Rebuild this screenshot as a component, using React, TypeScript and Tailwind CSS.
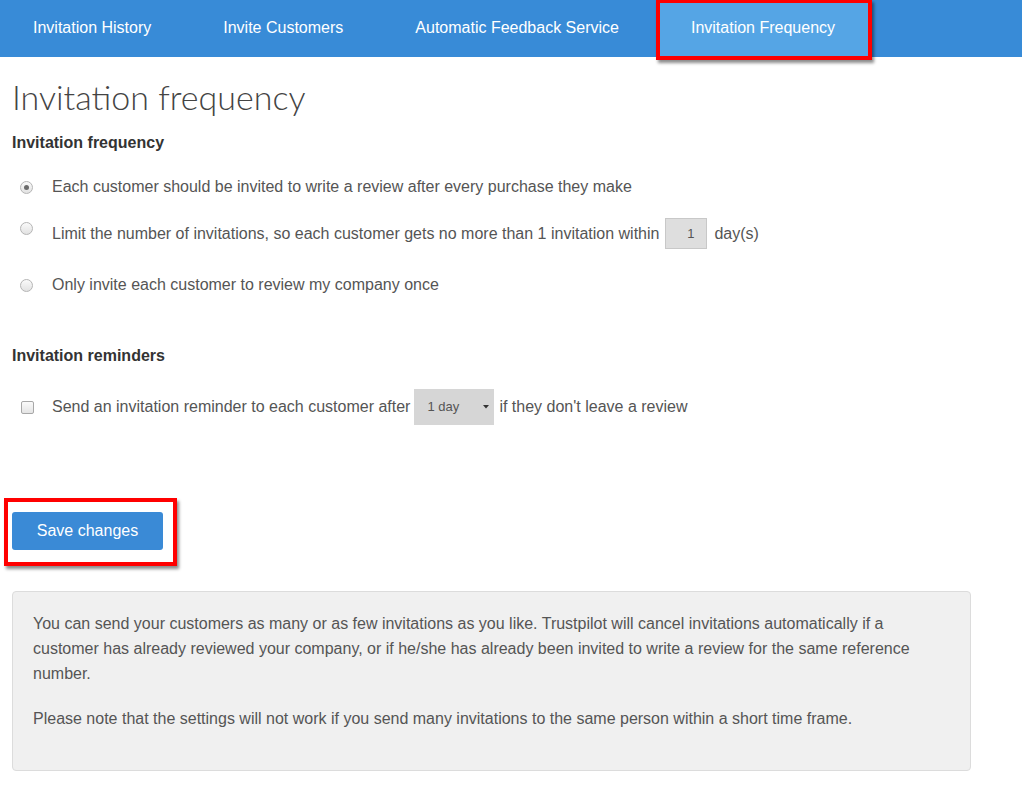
import React from 'react';

const TABS = ['Invitation History', 'Invite Customers', 'Automatic Feedback Service', 'Invitation Frequency'];

const Radio: React.FC<{ checked?: boolean; className?: string }> = ({ checked, className }) => (
  <span
    className={`flex h-[13px] w-[13px] shrink-0 items-center justify-center rounded-full border border-[#b5b5b5] bg-gradient-to-b from-[#fafafa] to-[#e2e2e2] ${className ?? ''}`}
  >
    {checked && <span className="h-[5px] w-[5px] rounded-full bg-[#6b6b6b]" />}
  </span>
);

export default function App() {
  return (
    <div className="min-h-[801px] w-[1022px] bg-white font-['Liberation_Sans',Arial,sans-serif] text-[16px] text-[#555]">
      {/* Top nav */}
      <nav className="flex h-[57px] bg-[#388bd7]">
        <div className="-ml-[3px] flex">
          {TABS.map((t, i) => {
            const active = i === TABS.length - 1;
            return (
              <div key={t} className="relative flex h-[57px] items-center px-[36px] pb-[2px] text-[16px] text-white">
                {active && (
                  <span className="pointer-events-none absolute left-[1px] -right-[1px] -top-[1px] h-[61px] border-[4px] border-[#ff0000] bg-[#55a5e5] shadow-[2px_3px_3px_rgba(0,0,0,0.45)]" />
                )}
                <span className="relative">{t}</span>
              </div>
            );
          })}
        </div>
      </nav>

      <main className="px-[12px]">
        <h1 className="mt-[20px] font-['Lato',sans-serif] text-[34px] font-light leading-[40px] text-[#444]">
          Invitation frequency
        </h1>

        <h2 className="mt-[16px] text-[16px] font-bold leading-[20px] text-[#333]">Invitation frequency</h2>

        <div className="mt-[24px] flex items-center leading-[20px]">
          <Radio checked className="ml-[8px] mr-[19px]" />
          <span>Each customer should be invited to write a review after every purchase they make</span>
        </div>

        <div className="mt-[21px] flex items-start leading-[20px]">
          <Radio className="ml-[8px] mr-[19px] mt-[4px]" />
          <span className="flex items-center">
            <span>Limit the number of invitations, so each customer gets no more than 1 invitation within</span>
            <span className="ml-[6px] flex h-[31px] w-[42px] items-center justify-end border border-[#c8c8c8] bg-[#dedede] pr-[12px] text-[13px] text-[#555]">
              1
            </span>
            <span className="ml-[7px]">day(s)</span>
          </span>
        </div>

        <div className="mt-[26px] flex items-center leading-[20px]">
          <Radio className="ml-[8px] mr-[19px]" />
          <span>Only invite each customer to review my company once</span>
        </div>

        <h2 className="mt-[51px] text-[16px] font-bold leading-[20px] text-[#333]">Invitation reminders</h2>

        <div className="mt-[23px] flex h-[36px] items-center leading-[20px]">
          <span className="ml-[9px] mr-[18px] h-[13px] w-[13px] shrink-0 rounded-[2px] border border-[#a8a8a8] bg-gradient-to-b from-[#fafafa] to-[#e4e4e4]" />
          <span>Send an invitation reminder to each customer after</span>
          <span className="ml-[4px] flex h-[36px] w-[80px] items-center justify-between bg-[#d6d6d6] pl-[13px] pr-[5px] text-[13px] text-[#555]">
            1 day
            <svg width="6" height="4" viewBox="0 0 6 4">
              <path d="M0 0h6L3 3.5z" fill="#333" />
            </svg>
          </span>
          <span className="ml-[5px]">if they don't leave a review</span>
        </div>

        <div className="-ml-[8px] mt-[73px] inline-block border-[4px] border-[#ff0000] pb-[12px] pl-[4px] pr-[10px] pt-[10px] shadow-[2px_3px_3px_rgba(0,0,0,0.45)]">
          <button className="flex h-[38px] w-[151px] items-center justify-center rounded-[3px] bg-[#3a8ad6] text-[16px] text-white">
            Save changes
          </button>
        </div>

        <div className="mt-[25px] h-[180px] w-[959px] rounded-[4px] border border-[#dcdcdc] bg-[#f0f0f0] px-[20px] pt-[19px] leading-[25px]">
          <p>
            You can send your customers as many or as few invitations as you like. Trustpilot will cancel invitations
            automatically if a customer has already reviewed your company, or if he/she has already been invited to write a
            review for the same reference number.
          </p>
          <p className="mt-[20px]">
            Please note that the settings will not work if you send many invitations to the same person within a short time
            frame.
          </p>
        </div>
      </main>
    </div>
  );
}
